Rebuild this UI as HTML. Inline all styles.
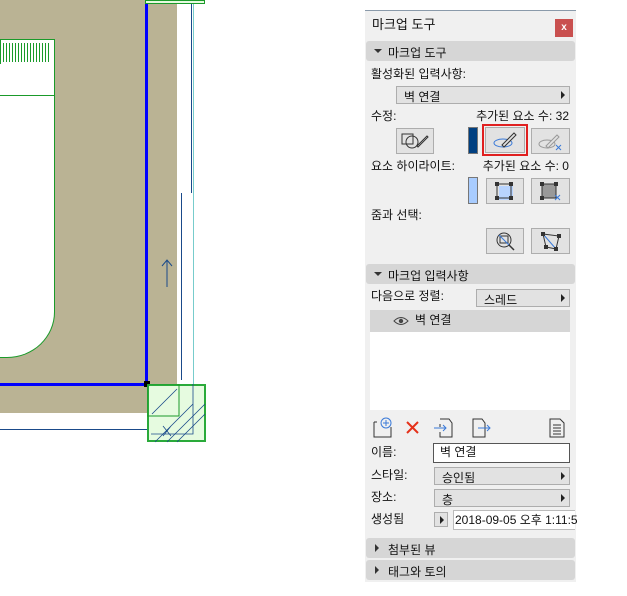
<!DOCTYPE html>
<html><head><meta charset="utf-8"><style>
*{box-sizing:border-box;margin:0;padding:0}
body{width:627px;height:596px;background:#fff;position:relative;overflow:hidden;font-family:"Liberation Sans","Noto Sans CJK KR",sans-serif;font-size:12px;color:#111}
.a{position:absolute}
.t{position:absolute;white-space:nowrap;line-height:14px}
.r{position:absolute;white-space:nowrap;line-height:14px;right:58px}
.sec{position:absolute;left:366px;width:209px;height:20px;background:#d6d6d6;border-radius:3px}
.sec span{position:absolute;left:22px;top:3px}
.dd{position:absolute;background:#e2e2e2;border:1px solid #adadad;height:18px}
.dd span{position:absolute;left:7px;top:1px}
.dd i{position:absolute;right:4px;top:4px;width:0;height:0;border-left:4px solid #222;border-top:4px solid transparent;border-bottom:4px solid transparent}
.btn{position:absolute;background:#e2e2e2;border:1px solid #adadad;height:26px}
</style></head><body>
<!-- drawing -->
<div class="a" style="left:0;top:0;width:177px;height:413px;background:#bab394"></div>
<div class="a" style="left:0;top:39px;width:55px;height:26px;background:#fff;border:1px solid #1a9a2a"></div>
<div class="a" style="left:0;top:43px;width:50px;height:19px;background:repeating-linear-gradient(90deg,#1a9a2a 0 1px,#fff 1px 3px)"></div>
<div class="a" style="left:0;top:64px;width:55px;height:294px;background:#fff;border-right:1px solid #1a9a2a;border-bottom:1px solid #1a9a2a;border-bottom-right-radius:48px 46px"></div>
<div class="a" style="left:0;top:95px;width:54px;height:1px;background:#1a9a2a"></div>
<div class="a" style="left:145px;top:0;width:3px;height:385px;background:#0000ff"></div>
<div class="a" style="left:0;top:383px;width:148px;height:3px;background:#0000ff"></div>
<div class="a" style="left:144px;top:381px;width:6px;height:6px;background:#000"></div>
<div class="a" style="left:0;top:429px;width:150px;height:1px;background:#1a4a8a"></div>
<div class="a" style="left:191px;top:0;width:1px;height:193px;background:#1a4a8a"></div>
<div class="a" style="left:181px;top:193px;width:1px;height:187px;background:#1a4a8a"></div>
<div class="a" style="left:193px;top:0;width:1px;height:385px;background:#7cc"></div>
<div class="a" style="left:145px;top:0;width:60px;height:4px;border:1px solid #1a9a2a;background:#e6fbe0"></div>
<svg class="a" style="left:160px;top:258px" width="14" height="30"><path d="M7 29V2M2 8L7 2L12 8" stroke="#1a4a8a" fill="none"/></svg>
<div class="a" style="left:147px;top:384px;width:59px;height:58px;background:#e6fbe0;border:2px solid #2aaa3a"></div>
<svg class="a" style="left:147px;top:384px" width="60" height="60"><path d="M0 32H32V0M4 50H46V0M5 30L30 5M20 58L58 20M30 58L58 30M8 58L46 20M16 42L24 52M16 52L24 42" stroke="#1a4a8a" fill="none" stroke-width=".8"/><rect x="0" y="0" width="32" height="32" fill="none" stroke="#1a9a2a"/></svg>
<!-- panel -->
<div class="a" style="left:365px;top:10px;width:211px;height:572px;background:#f0f0f0;border-top:1px solid #8a9aaa"></div>
<div class="t" style="left:372px;top:18px;font-size:13px">마크업 도구</div>
<div class="a" style="left:555px;top:19px;width:18px;height:18px;background:#c9504f;color:#fff;font-size:10px;text-align:center;line-height:17px;font-weight:bold">x</div>
<div class="sec" style="top:41px"><i class="a" style="left:8px;top:8px;border-top:4px solid #333;border-left:4px solid transparent;border-right:4px solid transparent"></i><span>마크업 도구</span></div>
<div class="t" style="left:371px;top:67px">활성화된 입력사항:</div>
<div class="dd" style="left:396px;top:86px;width:174px"><span>벽 연결</span><i></i></div>
<div class="t" style="left:371px;top:109px">수정:</div>
<div class="r" style="top:109px">추가된 요소 수: 32</div>
<div class="btn" style="left:396px;top:128px;width:38px"><svg width="36" height="24"><rect x="5" y="5" width="11" height="10" fill="none" stroke="#333"/><circle cx="15" cy="13" r="6" fill="none" stroke="#333"/><path d="M20 17L30 7L31 8L21 18Z" fill="none" stroke="#333"/></svg></div>
<div class="a" style="left:468px;top:127px;width:10px;height:27px;background:#003f80;border:1px solid #777"></div>
<div class="a" style="left:482px;top:124px;width:46px;height:32px;border:2px solid #e02020"></div>
<div class="btn" style="left:485px;top:127px;width:40px;height:26px"><svg width="38" height="24"><ellipse cx="17" cy="15" rx="9" ry="4" fill="none" stroke="#3a7ad8"/><path d="M16 17L28 5L30 7L18 19Z" fill="#e2e2e2" stroke="#333"/></svg></div>
<div class="btn" style="left:531px;top:128px;width:39px"><svg width="37" height="24"><ellipse cx="15" cy="15" rx="8" ry="4" fill="none" stroke="#999"/><path d="M14 17L25 6L27 8L16 19Z" fill="#e2e2e2" stroke="#999"/><path d="M24 16l5 5M29 16l-5 5" stroke="#3a7ad8"/></svg></div>
<div class="t" style="left:371px;top:159px">요소 하이라이트:</div>
<div class="r" style="top:159px">추가된 요소 수: 0</div>
<div class="a" style="left:468px;top:177px;width:10px;height:27px;background:#a8ccff;border:1px solid #777"></div>
<div class="btn" style="left:486px;top:178px;width:38px"><svg width="36" height="24"><rect x="12" y="7" width="14" height="14" fill="#b8d4ff"/><rect x="10" y="5" width="14" height="14" fill="none" stroke="#333"/><rect x="8" y="3" width="4" height="4" fill="#333"/><rect x="22" y="3" width="4" height="4" fill="#333"/><rect x="8" y="17" width="4" height="4" fill="#333"/><rect x="22" y="17" width="4" height="4" fill="#333"/></svg></div>
<div class="btn" style="left:531px;top:178px;width:39px"><svg width="37" height="24"><rect x="10" y="5" width="14" height="14" fill="#999" stroke="#333"/><rect x="8" y="3" width="4" height="4" fill="#333"/><rect x="22" y="3" width="4" height="4" fill="#333"/><rect x="8" y="17" width="4" height="4" fill="#333"/><path d="M23 16l5 5M28 16l-5 5" stroke="#3a7ad8"/></svg></div>
<div class="t" style="left:371px;top:208px">줌과 선택:</div>
<div class="btn" style="left:486px;top:228px;width:38px"><svg width="36" height="24"><circle cx="17" cy="11" r="7" fill="none" stroke="#333"/><rect x="13" y="7" width="8" height="7" fill="none" stroke="#333"/><path d="M12 6L22 16" stroke="#3a7ad8"/><path d="M22 16L27 21" stroke="#333" stroke-width="1.5"/></svg></div>
<div class="btn" style="left:531px;top:228px;width:39px"><svg width="37" height="24"><path d="M11 5L27 7L24 20L14 18Z" fill="none" stroke="#333"/><path d="M11 5L24 20" stroke="#3a7ad8"/><rect x="9" y="3" width="4" height="4" fill="#333"/><rect x="25" y="5" width="4" height="4" fill="#333"/><rect x="22" y="18" width="4" height="4" fill="#333"/><rect x="12" y="16" width="4" height="4" fill="#333"/></svg></div>
<div class="sec" style="top:264px"><i class="a" style="left:8px;top:8px;border-top:4px solid #333;border-left:4px solid transparent;border-right:4px solid transparent"></i><span>마크업 입력사항</span></div>
<div class="t" style="left:371px;top:289px">다음으로 정렬:</div>
<div class="dd" style="left:476px;top:289px;width:94px"><span>스레드</span><i></i></div>
<div class="a" style="left:370px;top:310px;width:200px;height:100px;background:#fff"></div>
<div class="a" style="left:370px;top:310px;width:200px;height:22px;background:#d6d6d6"></div>
<svg class="a" style="left:393px;top:315px" width="16" height="12"><path d="M1 6Q8 -1 15 6Q8 13 1 6Z" fill="none" stroke="#444"/><circle cx="8" cy="6" r="2.2" fill="#444"/></svg>
<div class="t" style="left:415px;top:313px">벽 연결</div>
<svg class="a" style="left:372px;top:417px" width="200" height="22"><path d="M2 5H5M2 5V20H19V10" fill="none" stroke="#333"/><circle cx="14" cy="6" r="5" fill="none" stroke="#3a7ad8"/><path d="M14 3V9M11 6H17" stroke="#3a7ad8"/><path d="M35 5L46 16M46 5L35 16" stroke="#e5311a" stroke-width="2"/><path d="M68 2H77L80 6V20H68V15M68 10V7" fill="none" stroke="#333"/><path d="M62 11H74M71 8L74 11L71 14" fill="none" stroke="#3a7ad8"/><path d="M101 2H110L113 6V20H101Z" fill="none" stroke="#333"/><path d="M106 11H118M115 8L118 11L115 14" fill="none" stroke="#3a7ad8"/><path d="M178 2H188L192 6V20H178Z M181 8H189M181 11H189M181 14H189M181 17H189" fill="none" stroke="#333"/></svg>
<div class="t" style="left:371px;top:445px">이름:</div>
<div class="a" style="left:433px;top:443px;width:137px;height:20px;background:#fff;border:1px solid #555"></div>
<div class="t" style="left:440px;top:445px">벽 연결</div>
<div class="t" style="left:371px;top:468px">스타일:</div>
<div class="dd" style="left:434px;top:467px;width:136px"><span>승인됨</span><i></i></div>
<div class="t" style="left:371px;top:490px">장소:</div>
<div class="dd" style="left:434px;top:489px;width:136px"><span>층</span><i></i></div>
<div class="t" style="left:371px;top:512px">생성됨</div>
<div class="dd" style="left:434px;top:512px;width:14px;height:15px"><i style="right:3px;top:3px"></i></div>
<div class="a" style="left:453px;top:510px;width:122px;height:20px;background:#fff;border:1px solid #bbb;border-right:none"></div>
<div class="t" style="left:455px;top:513px">2018-09-05 오후 1:11:5</div>
<div class="sec" style="top:538px"><i class="a" style="left:9px;top:6px;border-left:4px solid #333;border-top:4px solid transparent;border-bottom:4px solid transparent"></i><span>첨부된 뷰</span></div>
<div class="sec" style="top:560px"><i class="a" style="left:9px;top:6px;border-left:4px solid #333;border-top:4px solid transparent;border-bottom:4px solid transparent"></i><span>태그와 토의</span></div>
</body></html>
